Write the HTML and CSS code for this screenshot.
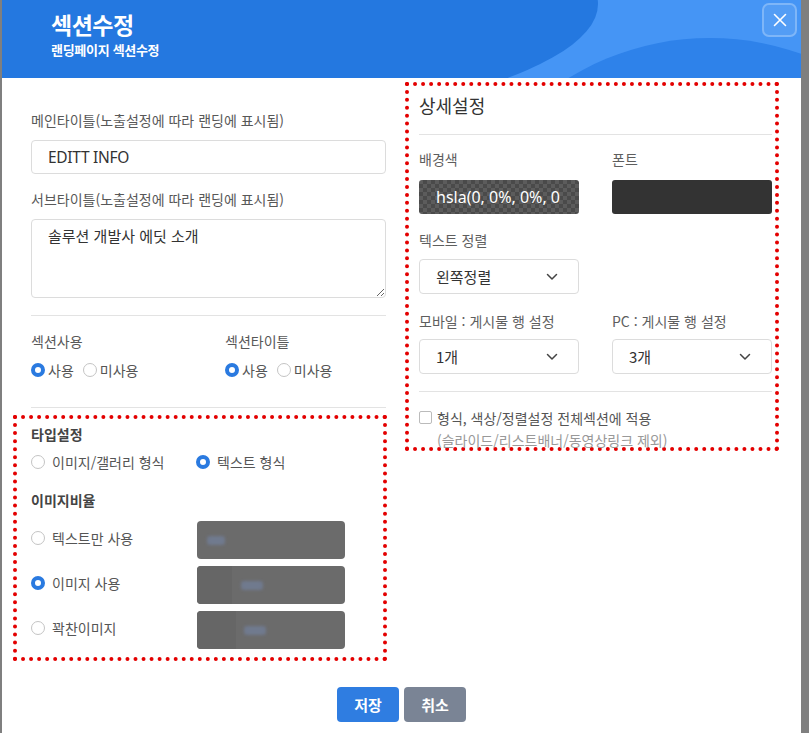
FILE: index.html
```html
<!DOCTYPE html>
<html lang="ko">
<head>
<meta charset="utf-8">
<title>섹션수정</title>
<link rel="stylesheet" href="styles.css">
</head>
<body>
<div class="modal">
  <header class="header">
    <span class="shape-a"></span>
    <span class="shape-b"></span>
    <div class="header-text">
      <h1 class="title">섹션수정</h1>
      <p class="subtitle">랜딩페이지 섹션수정</p>
    </div>
    <button class="close" type="button" aria-label="닫기">
      <svg viewBox="0 0 16 16" width="16" height="16"><path d="M2.5 2.5 L13.5 13.5 M13.5 2.5 L2.5 13.5" stroke="#fff" stroke-width="1.6" stroke-linecap="round" fill="none"/></svg>
    </button>
  </header>

  <div class="body">
    <div class="left">
      <div class="label">메인타이틀(노출설정에 따라 랜딩에 표시됨)</div>
      <div class="input">EDITT INFO</div>
      <div class="label label-2">서브타이틀(노출설정에 따라 랜딩에 표시됨)</div>
      <textarea class="textarea" readonly>솔루션 개발사 에딧 소개</textarea>
      <hr class="rule rule-1">
      <div class="pair">
        <div>
          <div class="label">섹션사용</div>
          <div class="radios">
            <span class="opt"><span class="radio on"></span>사용</span>
            <span class="opt"><span class="radio"></span>미사용</span>
          </div>
        </div>
        <div>
          <div class="label">섹션타이틀</div>
          <div class="radios">
            <span class="opt"><span class="radio on"></span>사용</span>
            <span class="opt"><span class="radio"></span>미사용</span>
          </div>
        </div>
      </div>
      <hr class="rule rule-2">

      <div class="dotted type-box">
        <div class="sub-title">타입설정</div>
        <div class="type-row">
          <span class="opt wide"><span class="radio"></span>이미지/갤러리 형식</span>
          <span class="opt wide"><span class="radio on"></span>텍스트 형식</span>
        </div>
        <div class="sub-title ratio-title">이미지비율</div>
        <div class="ratio-list">
          <div class="ratio-row">
            <span class="opt wide"><span class="radio"></span>텍스트만 사용</span>
            <span class="thumb"><span class="blob b1"></span></span>
          </div>
          <div class="ratio-row">
            <span class="opt wide"><span class="radio on"></span>이미지 사용</span>
            <span class="thumb"><span class="dark d2"></span><span class="blob b2"></span></span>
          </div>
          <div class="ratio-row">
            <span class="opt wide"><span class="radio"></span>꽉찬이미지</span>
            <span class="thumb"><span class="dark d3"></span><span class="blob b3"></span></span>
          </div>
        </div>
      </div>
    </div>

    <div class="right dotted">
      <h2 class="detail-title">상세설정</h2>
      <hr class="rule detail-rule">
      <div class="grid2">
        <div>
          <div class="rlabel">배경색</div>
          <div class="swatch checker"><span>hsla(0, 0%, 0%, 0</span></div>
        </div>
        <div>
          <div class="rlabel">폰트</div>
          <div class="swatch dark-swatch"></div>
        </div>
      </div>
      <div class="rlabel gap-label">텍스트 정렬</div>
      <div class="grid2">
        <div class="select">왼쪽정렬<svg class="chev" viewBox="0 0 12 8" width="12" height="8"><path d="M1.5 1.5 L6 6 L10.5 1.5" stroke="#444" stroke-width="1.5" fill="none" stroke-linecap="round" stroke-linejoin="round"/></svg></div>
      </div>
      <div class="grid2 gap-label">
        <div>
          <div class="rlabel">모바일 : 게시물 행 설정</div>
          <div class="select sel-2">1개<svg class="chev" viewBox="0 0 12 8" width="12" height="8"><path d="M1.5 1.5 L6 6 L10.5 1.5" stroke="#444" stroke-width="1.5" fill="none" stroke-linecap="round" stroke-linejoin="round"/></svg></div>
        </div>
        <div>
          <div class="rlabel">PC : 게시물 행 설정</div>
          <div class="select sel-2">3개<svg class="chev" viewBox="0 0 12 8" width="12" height="8"><path d="M1.5 1.5 L6 6 L10.5 1.5" stroke="#444" stroke-width="1.5" fill="none" stroke-linecap="round" stroke-linejoin="round"/></svg></div>
        </div>
      </div>
      <hr class="rule detail-rule-2">
      <div class="check-row">
        <span class="checkbox"></span>
        <div class="check-text">
          <div>형식, 색상/정렬설정 전체섹션에 적용</div>
          <div class="muted">(슬라이드/리스트배너/동영상링크 제외)</div>
        </div>
      </div>
    </div>
  </div>

  <div class="footer">
    <button class="btn btn-save" type="button">저장</button>
    <button class="btn btn-cancel" type="button">취소</button>
  </div>
</div>
</body>
</html>
```

FILE: styles.css
```css
* { box-sizing: border-box; }
html, body { margin: 0; padding: 0; }
body {
  background: #7f7f7f;
  font-family: "Noto Sans CJK KR", "Noto Sans", sans-serif;
  height: 733px;
  overflow: hidden;
}
.modal {
  margin-left: 2px;
  width: 799px;
  background: #fff;
  min-height: 760px;
}
.header {
  position: relative;
  overflow: hidden;
  height: 78px;
  background: #4595f5;
  padding: 8px 0 0 49px;
}
.shape-a {
  position: absolute;
  left: -600px;
  top: -136px;
  width: 1196px;
  height: 280px;
  border-radius: 50%;
  background: #2478e0;
}
.shape-b {
  position: absolute;
  left: 438px;
  top: 38px;
  width: 540px;
  height: 540px;
  border-radius: 50%;
  background: #2e82ea;
}
.header-text { position: relative; color: #fff; }
.title {
  margin: 0;
  font-size: 23px;
  line-height: 32px;
  font-weight: 700;
  letter-spacing: -0.5px;
}
.subtitle {
  margin: 1px 0 0;
  font-size: 13px;
  line-height: 18px;
  font-weight: 700;
  letter-spacing: -0.3px;
}
.close {
  position: absolute;
  left: 760px;
  top: 3px;
  width: 35px;
  height: 34px;
  border: 2px solid rgba(255,255,255,0.25);
  border-radius: 7px;
  background: rgba(255,255,255,0.08);
  display: flex;
  align-items: center;
  justify-content: center;
  padding: 0;
}

.body {
  display: grid;
  grid-template-columns: 355px 374px;
  column-gap: 19px;
  padding-left: 29px;
  align-items: start;
}
.label {
  font-size: 14px;
  line-height: 20px;
  color: #585858;
  margin-bottom: 10px;
}
.left { padding-top: 32px; }
.input {
  height: 34px;
  border: 1px solid #dcdcdc;
  border-radius: 4px;
  padding-left: 16px;
  font-family: "Noto Sans", "Noto Sans CJK KR", sans-serif;
  font-size: 15.5px;
  line-height: 32px;
  color: #333;
  letter-spacing: -0.3px;
}
.label-2 { margin-top: 15px; }
.textarea {
  display: block;
  width: 355px;
  height: 79px;
  margin: 0;
  border: 1px solid #dcdcdc;
  border-radius: 4px;
  padding: 5px 16px;
  font-family: "Noto Sans CJK KR", sans-serif;
  font-size: 15px;
  line-height: 22px;
  color: #333;
  resize: vertical;
  outline: none;
}
.rule {
  border: 0;
  border-top: 1px solid #e3e3e3;
  margin: 0;
}
.rule-1 { margin-top: 17px; }
.pair {
  display: grid;
  grid-template-columns: 194px 1fr;
  margin-top: 15px;
}
.pair .label { margin-bottom: 9px; }
.radios { display: flex; gap: 9px; }
.opt {
  display: inline-flex;
  align-items: center;
  gap: 3px;
  font-size: 14px;
  line-height: 20px;
  color: #555;
}
.opt.wide { gap: 7px; }
.radio {
  width: 14px;
  height: 14px;
  border-radius: 50%;
  border: 1px solid #c4c4c4;
  background: #fff;
  flex: none;
}
.radio.on { border: 4px solid #2a7ae0; }
.rule-2 { margin-top: 27px; }

.dotted { border: 4px dotted #e30000; }
.type-box {
  margin: 7px -1px 0 -18px;
  padding: 5px 0 8px 14px;
}
.sub-title {
  font-size: 14px;
  line-height: 20px;
  font-weight: 700;
  color: #444;
}
.type-row {
  display: grid;
  grid-template-columns: 165px 1fr;
  margin-top: 8px;
}
.ratio-title { margin-top: 18px; }
.ratio-list {
  margin-top: 11px;
  display: flex;
  flex-direction: column;
  gap: 7px;
}
.ratio-row {
  display: grid;
  grid-template-columns: 166px 148px;
  align-items: start;
}
.ratio-row .opt { margin-top: 7px; }
.thumb {
  position: relative;
  height: 38px;
  border-radius: 4px;
  background: #6b6b6b;
  overflow: hidden;
  display: block;
}
.dark {
  position: absolute;
  top: 0;
  bottom: 0;
  left: 0;
  background: #666;
}
.d2 { width: 35px; }
.d3 { width: 39px; }
.blob {
  position: absolute;
  height: 9px;
  top: 15px;
  border-radius: 3px;
  background: #707a8e;
  filter: blur(1.5px);
}
.b1 { left: 10px; width: 18px; }
.b2 { left: 44px; width: 22px; }
.b3 { left: 47px; width: 22px; }

.right {
  margin-top: 4px;
  height: 369px;
  padding: 6px 3px 0 10px;
}
.detail-title {
  margin: 0;
  font-size: 18px;
  line-height: 26px;
  font-weight: 400;
  color: #333;
}
.detail-rule { margin-top: 16px; }
.grid2 {
  display: grid;
  grid-template-columns: 160px 160px;
  column-gap: 33px;
}
.rlabel {
  font-size: 14px;
  line-height: 20px;
  color: #5e5e5e;
  margin-top: 14px;
  margin-bottom: 11px;
}
.swatch {
  height: 34px;
  border-radius: 3px;
}
.checker {
  background-color: #5c5c5c;
  background-image:
    linear-gradient(45deg, #4a4a4a 25%, transparent 25%, transparent 75%, #4a4a4a 75%),
    linear-gradient(45deg, #4a4a4a 25%, transparent 25%, transparent 75%, #4a4a4a 75%);
  background-size: 8px 8px;
  background-position: 0 0, 4px 4px;
  overflow: hidden;
  white-space: nowrap;
  padding-left: 17px;
  color: #fff;
  font-family: "Noto Sans", sans-serif;
  font-size: 16px;
  line-height: 34px;
}
.dark-swatch { background: #333; }
.gap-label { margin-top: 2px; }
.rlabel.gap-label { margin-top: 16px; margin-bottom: 9px; }
.select {
  height: 35px;
  border: 1px solid #dcdcdc;
  border-radius: 4px;
  padding: 0 20px 0 16px;
  display: flex;
  align-items: center;
  justify-content: space-between;
  font-size: 15px;
  color: #333;
}
.chev { flex: none; }
.grid2.gap-label .rlabel { margin-top: 15px; margin-bottom: 8px; }
.detail-rule-2 { margin-top: 17px; }
.check-row {
  display: flex;
  align-items: flex-start;
  gap: 5px;
  margin-top: 15px;
}
.checkbox {
  width: 13px;
  height: 13px;
  border: 1px solid #bbb;
  border-radius: 2px;
  margin-top: 4px;
  flex: none;
}
.check-text {
  font-size: 14px;
  line-height: 22px;
  color: #555;
}
.muted { color: #999; }

.footer {
  display: flex;
  justify-content: center;
  gap: 5px;
  padding-top: 26px;
}
.btn {
  width: 62px;
  height: 35px;
  border: 0;
  border-radius: 4px;
  color: #fff;
  font-family: "Noto Sans CJK KR", sans-serif;
  font-size: 15px;
  font-weight: 700;
  padding: 0;
}
.btn-save { background: #2f7de1; }
.btn-cancel { background: #7a8495; }
```
